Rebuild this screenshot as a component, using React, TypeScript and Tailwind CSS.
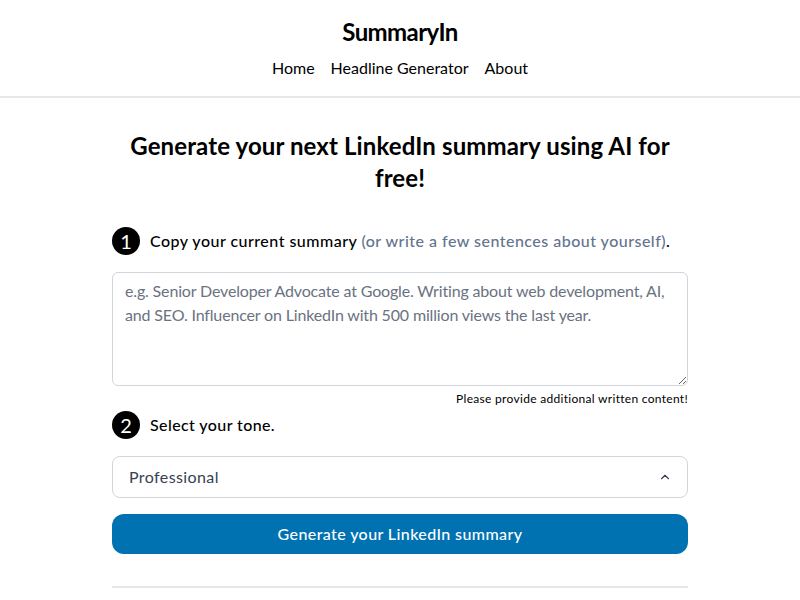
import React from "react";

function Step({ n }: { n: string }) {
  return (
    <div className="w-7 h-7 rounded-full bg-black text-white flex items-center justify-center text-[20px] leading-none shrink-0">
      {n}
    </div>
  );
}

export default function App() {
  return (
    <div className="min-h-screen bg-white text-black" style={{ fontFamily: "Lato, 'Noto Sans', sans-serif" }}>
      <header className="border-b-2 border-gray-200 pt-[16px] pb-[16px] flex flex-col items-center">
        <div className="text-[24px] leading-[32px] font-bold tracking-tight">SummaryIn</div>
        <nav className="flex gap-4 mt-[8px] text-[16px] leading-[24px]">
          <span>Home</span>
          <span>Headline Generator</span>
          <span>About</span>
        </nav>
      </header>
      <main className="w-[576px] mx-auto pt-[32px]">
        <h1 className="text-[24px] leading-[32px] font-bold text-center tracking-[0.005em]">
          Generate your next LinkedIn summary using AI for free!
        </h1>
        <div className="flex items-center gap-[10px] mt-[33px]">
          <Step n="1" />
          <p className="text-[16px] leading-[24px] font-medium tracking-[0.03em]">
            Copy your current summary <span className="text-slate-500">(or write a few sentences about yourself)</span>.
          </p>
        </div>
        <textarea
          rows={4}
          className="mt-[17px] w-full h-[114px] border border-gray-300 rounded-md px-3 pt-[6px] pb-2 text-[16px] leading-[24px] tracking-[-0.01em] placeholder:text-gray-500 resize-y block"
          placeholder="e.g. Senior Developer Advocate at Google. Writing about web development, AI, and SEO. Influencer on LinkedIn with 500 million views the last year."
        />
        <div className="text-right text-[12px] leading-[16px] mt-[5px] tracking-wide">Please provide additional written content!</div>
        <div className="flex items-center gap-[10px] mt-[4px]">
          <Step n="2" />
          <p className="text-[16px] leading-[24px] font-medium tracking-wide">Select your tone.</p>
        </div>
        <div className="mt-[17px] h-[42px] border border-gray-300 rounded-lg flex items-center justify-between pl-4 pr-[15px] text-[16px] text-gray-700 tracking-wide">
          <span>Professional</span>
          <svg width="14" height="14" viewBox="0 0 24 24" fill="none" stroke="currentColor" strokeWidth="2" strokeLinecap="round" strokeLinejoin="round">
            <path d="m18 15-6-6-6 6" />
          </svg>
        </div>
        <button className="mt-[16px] w-full h-[40px] rounded-xl bg-[#0072b1] text-white text-[16px] font-medium tracking-wide">
          Generate your LinkedIn summary
        </button>
        <hr className="mt-[32px] border-t-2 border-gray-200" />
      </main>
    </div>
  );
}
